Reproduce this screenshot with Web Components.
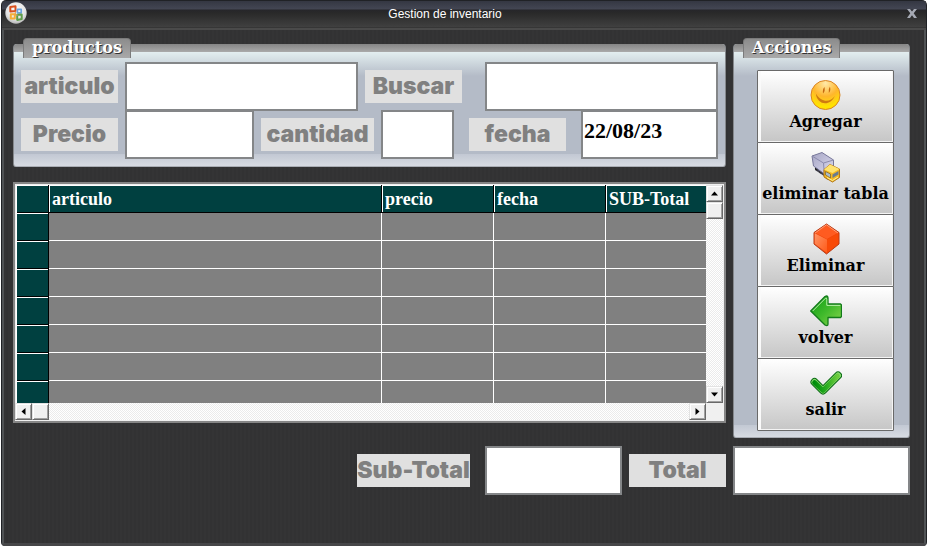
<!DOCTYPE html>
<html lang="es">
<head>
<meta charset="utf-8">
<title>Gestion de inventario</title>
<style>
  html, body { margin: 0; background: #fff; }
  body { font-family: "Liberation Sans", Arial, sans-serif; }
</style>
</head>
<body>
<inv-window heading="Gestion de inventario">
  <inv-group heading="productos" slot="form">
    <inv-row>
      <inv-field label="articulo" style="--w:337px"></inv-field>
      <inv-field label="Buscar" style="--w:353px;--gap:23px"></inv-field>
    </inv-row>
    <inv-row>
      <inv-field label="Precio" style="--w:233px"></inv-field>
      <inv-field label="cantidad" style="--w:193px;--label:113px"></inv-field>
      <inv-field label="fecha" value="22/08/23" style="--w:257px;--gap:15px;--lead:8px"></inv-field>
    </inv-row>
  </inv-group>
  <inv-table slot="table"></inv-table>
  <inv-group heading="Acciones" slot="actions" style="--pad:12px 15px 8px 23px">
    <inv-action icon="smile">Agregar</inv-action>
    <inv-action icon="truck">eliminar tabla</inv-action>
    <inv-action icon="cube">Eliminar</inv-action>
    <inv-action icon="arrow">volver</inv-action>
    <inv-action icon="check">salir</inv-action>
  </inv-group>
  <inv-field label="Sub-Total" slot="totals" style="--w:265px;--grow:0;--label:113px;--gap:15px"></inv-field>
  <inv-field label="Total" slot="totals" style="--w:281px;--grow:0"></inv-field>
</inv-window>

<script>
const define = (name, html, setup) => {
  const template = document.createElement('template');
  template.innerHTML = html;
  customElements.define(name, class extends HTMLElement {
    constructor() {
      super();
      this.attachShadow({ mode: 'open' }).append(template.content.cloneNode(true));
    }
    connectedCallback() { if (setup) setup(this, this.shadowRoot); }
  });
};

/* Window frame: title bar, two-column work area, totals line */
define('inv-window', `
<style>
  :host { display: flex; flex-direction: column; box-sizing: border-box; min-height: 100vh;
    margin: 0 1px; border: 1px solid #202226; border-bottom: 0; border-radius: 5px 5px 4px 4px; overflow: hidden;
    background: repeating-linear-gradient(90deg, #323233 0 2px, #343435 2px 4px); }
  header { display: flex; align-items: center; height: 29px; box-sizing: border-box; padding: 0 7px 3px 3px;
    border-bottom: 2px solid #4a4a4a;
    background: linear-gradient(#343742 0, #434653 8px, #26262a 9px, #292929 12px, #404040 26px, #2c2c2c 27px); }
  h1 { flex: 1; margin: 0; padding: 2px 42px 0 0; text-align: center; font-size: 12px; line-height: 16px; font-weight: 400; color: #fff; }
  header > svg { width: 22px; height: 22px; display: block; }
  button { width: 14px; height: 14px; padding: 0; border: 0; background: none; }
  button svg { display: block; margin: auto; }
  main { flex: 1; padding: 8px 14px 0 9px; border: 2px solid #505355; border-top: 0; border-bottom: 3px solid #464648; }
  .cols { display: grid; grid-template-columns: minmax(0, 1fr) 177px; gap: 7px; align-items: start; }
  .left { display: grid; gap: 15px; min-width: 0; }
  .totals { display: flex; justify-content: flex-end; gap: 7px; padding-top: 8px; }
</style>
<header>
  <svg viewBox="0 0 22 22" aria-hidden="true">
    <defs><radialGradient id="o" cx=".5" cy=".35" r=".7"><stop offset="0" stop-color="#fff"/><stop offset=".65" stop-color="#e2e2e2"/><stop offset="1" stop-color="#aaa"/></radialGradient></defs>
    <circle cx="11" cy="11" r="10.7" fill="url(#o)"/>
    <g fill="none" stroke-width="2" stroke-linejoin="round">
      <path d="M5.300 9.500V5L10.500 4.300v4.800z" stroke="#d8501f"/>
      <path d="M12.400 7.300h3.800v3.500h-3.800z" stroke="#6ba3dc" stroke-width="1.700"/>
      <path d="M5.800 12.300h4v4.200h-4z" stroke="#f5ae35"/>
      <path d="M12.200 12.800l4.500-.3v4.500l-4.500.9z" stroke="#5f9d4a"/>
      <path d="M10.300 9.500v3.500h2.500" stroke="#e6a04a" stroke-width="1.200"/>
    </g>
  </svg>
  <h1></h1>
  <button aria-label="Cerrar"><svg width="10" height="9" viewBox="0 0 10 9"><path d="M0 0h3l2 2.500L7 0h3L6.700 4.300 10 9H7L5 6.200 3 9H0l3.300-4.700z" fill="#a5a9b3"/></svg></button>
</header>
<main>
  <div class="cols">
    <div class="left"><slot name="form"></slot><slot name="table"></slot></div>
    <slot name="actions"></slot>
  </div>
  <div class="totals"><slot name="totals"></slot></div>
</main>`, (el, root) => { root.querySelector('h1').textContent = el.getAttribute('heading'); });

/* Titled panel with a raised tab */
define('inv-group', `
<style>
  :host { display: grid; }
  h2 { grid-area: 1 / 1; z-index: 1; justify-self: start; align-self: start; box-sizing: border-box; height: 20px; margin: 0 0 0 10px; padding: 0 8px;
    border: 1px solid #7b7b7b; border-bottom: 0; border-radius: 4px 4px 0 0; background: linear-gradient(#8c8c8c, #a9a9a9);
    font: bold 16px/18px "DejaVu Serif", serif; color: #fff; text-shadow: 1px 1px 0 #333; }
  section { grid-area: 1 / 1; min-width: 0; margin-top: 6px; padding-top: 14px; border-radius: 4px 4px 3px 3px; box-sizing: border-box;
    border: 1px solid #85888c; border-top: 0; border-bottom-color: #a9adb4;
    background:
      linear-gradient(#858585, #aaa 8px, transparent 8px),
      linear-gradient(to top, #d7dbe2, #c2c8d3 12px, transparent 12px),
      linear-gradient(#e3eef0 8px, #dbe6e9 12px, #b4bbc7 32px); }
  .body { padding: var(--pad, 4px 7px 8px 7px); margin-bottom: -1px; }
</style>
<h2></h2><section><div class="body"><slot></slot></div></section>`,
(el, root) => { root.querySelector('h2').textContent = el.getAttribute('heading'); });

define('inv-row', `
<style>:host { display: flex; gap: 7px; height: 48px; } :host(:last-child) { height: 49px; }</style><slot></slot>`);

/* Label plate and text box */
define('inv-field', `
<style>
  :host { display: flex; align-items: center; gap: var(--gap, 7px); box-sizing: border-box; height: 49px; min-width: 0;
    padding-left: var(--lead, 0); flex: var(--grow, 1) 1 var(--w); }
  label { flex: none; width: var(--label, 97px); text-align: center; background: #e0e0e0; color: #808080;
    font: 900 23px/33px Inter, sans-serif; font-variant-ligatures: none; white-space: nowrap; }
  input { flex: 1; min-width: 0; width: 0; height: 49px; box-sizing: border-box; border: 2px solid #848688; border-radius: 0;
    background: #fff; padding: 0 1px 8px; margin: 0; outline: 0; color: #000; font: bold 22px/32px "Liberation Serif", serif; }
</style>
<label for="f"></label><input id="f" type="text">`,
(el, root) => {
  root.querySelector('label').textContent = el.getAttribute('label');
  root.querySelector('input').value = el.getAttribute('value') || '';
});

const icons = {
  smile: `<defs><radialGradient id="g" cx=".5" cy=".1" r="1"><stop offset="0" stop-color="#ffe9a8"/><stop offset=".45" stop-color="#ffb62c"/><stop offset=".8" stop-color="#ffe400"/><stop offset="1" stop-color="#ffd800"/></radialGradient></defs>
    <circle cx="15.500" cy="16" r="14.500" fill="url(#g)" stroke="#d98324"/>
    <path d="M14.500 8q-2.200 2-1.500 6.500q2.400-2 1.500-6.500zM20 7.500q-2 2.500-1.200 6.500q2.200-2 1.200-6.500z" fill="#c66a10"/>
    <path d="M5.800 14.500C7 26 20 28 24.800 17C20.500 23.500 11.500 24 5.800 14.500z" fill="#cf7b10"/>`,
  truck: `<defs><linearGradient id="g" x2="1" y2="1"><stop offset="0" stop-color="#a6a5c4"/><stop offset="1" stop-color="#dddcf0"/></linearGradient></defs>
    <path d="M5 15l15 10v4L5 19z" fill="#444452"/><circle cx="7" cy="17.500" r="2" fill="#222"/><circle cx="11" cy="20.500" r="2" fill="#333"/><circle cx="18" cy="26" r="2.500" fill="#333"/>
    <path d="M2 5L12 1.500l11.500 7.500v6l-9 8L3.500 15z" fill="url(#g)" stroke="#77779a"/><path d="M2 5L13.500 12 23.500 9M13.500 12l.8 11" fill="none" stroke="#8b8bad"/>
    <path d="M14 18.500l6-5 9.500 4.500v8.500L22.500 31 14 26z" fill="#f5b920" stroke="#b37716"/><path d="M14 18.500l6-5 9.500 4.500-7 4z" fill="#ffe36e"/>
    <path d="M15.500 20.500l5 2.500v4l-5-3z" fill="#a8bacb" stroke="#806020" stroke-width=".7"/><path d="M22.500 23.500l6-3.500v3.500l-6 3.500z" fill="#677b93"/><path d="M17 26.500l5.500 3 5.500-3.500" fill="none" stroke="#fff3a0"/>`,
  cube: `<defs><linearGradient id="g" x2="1" y2="1"><stop offset="0" stop-color="#ff9465"/><stop offset="1" stop-color="#ff5a18"/></linearGradient></defs>
    <path d="M16.500 1l12.500 8.500V21L16.500 31 4 21V9.500z" fill="#f04308" stroke="#b63b17"/><path d="M16.500 1.800L28 9.700 17 16 5 9.700z" fill="#ff5b20"/>
    <path d="M4.700 10.300L17 16.500V30L4.700 20.800z" fill="url(#g)"/><path d="M17 16.500L28.300 10v10.800L17 30z" fill="#f84a08"/>
    <path d="M5 10L16.500 1.800 28 10" fill="none" stroke="#ff9c74"/>`,
  arrow: `<defs><linearGradient id="g" x2="1" y2="1"><stop offset="0" stop-color="#0c9e12"/><stop offset=".5" stop-color="#3fb92b"/><stop offset="1" stop-color="#8ad64e"/></linearGradient></defs>
    <path d="M.7 16L15 1.500q3-1.500 3 1.500v6h12.500l1 1v11.500l-1 1H18V29q0 2.500-3 1z" fill="url(#g)" stroke="#137a1b" stroke-width="1.300" stroke-linejoin="round"/>
    <path d="M2.700 16L15.500 3.200q1.300-.8 1.300 1V10.400h13.500" fill="none" stroke="#b8efa8"/>`,
  check: `<defs><linearGradient id="g" x2="1"><stop offset="0" stop-color="#008d0c"/><stop offset=".5" stop-color="#25ab1e"/><stop offset="1" stop-color="#6dcc3d"/></linearGradient></defs>
    <path d="M4.500 15L13 23.500 28 8.500" fill="none" stroke="#0c6d16" stroke-width="8" stroke-linejoin="round" stroke-linecap="round"/>
    <path d="M4.500 15L13 23.500 28 8.500" fill="none" stroke="#86d86d" stroke-width="6" stroke-linejoin="round" stroke-linecap="round"/>
    <path d="M4.500 15.500L13 23.500 27.500 9" fill="none" stroke="url(#g)" stroke-width="4.600" stroke-linejoin="round" stroke-linecap="round"/>`
};

define('inv-action', `
<style>
  :host { display: block; height: 72px; }
  button { display: flex; flex-direction: column; align-items: center; gap: 2px; box-sizing: border-box; width: 100%; height: 73px;
    margin: 0; padding: 8px 0 0; border: 1px solid #696969; border-radius: 1px; color: #000;
    background: linear-gradient(#fff, #c6c6c6); box-shadow: inset 3px 0 #fafafa, inset -1px -1px #f4f4f4, inset 0 1px #fff; }
  svg { width: 32px; height: 32px; flex: none; }
  span { font: bold 16px/18px "DejaVu Serif", serif; white-space: nowrap; }
</style>
<button><svg viewBox="0 0 32 32" aria-hidden="true"></svg><span><slot></slot></span></button>`,
(el, root) => { root.querySelector('svg').innerHTML = icons[el.getAttribute('icon')]; });

/* Scroll bar with an arrow at each end */
define('inv-scroll', `
<style>
  :host { display: flex; background: repeating-conic-gradient(#fff 0 25%, #ebebeb 0 50%) 0 0 / 2px 2px; }
  :host([vertical]) { flex-direction: column; }
  button, i { display: grid; place-items: center; box-sizing: border-box; width: 17px; height: 17px; padding: 0; margin: 0; border-radius: 0; flex: none;
    background: #f0f0f0; border: 1px solid #e3e3e3; border-right-color: #696969; border-bottom-color: #696969;
    box-shadow: inset 1px 1px #fff, inset -1px -1px #a0a0a0; }
  .end { margin-left: auto; }
  :host([vertical]) .end { margin: auto 0 0; }
  svg { transform: rotate(-90deg); }
  .end svg { transform: rotate(90deg); }
  :host([vertical]) svg { transform: none; }
  :host([vertical]) .end svg { transform: rotate(180deg); }
</style>
<button aria-label="Retroceder"><svg width="7" height="7"><path d="M0 5.500L3.500 1.500 7 5.500z"/></svg></button><i></i>
<button class="end" aria-label="Avanzar"><svg width="7" height="7"><path d="M0 5.500L3.500 1.500 7 5.500z"/></svg></button>`);

define('inv-table', `
<style>
  :host { display: grid; grid-template-columns: minmax(0, 1fr) 17px; padding: 1px 1px 1px 0; border: 2px solid #868686; background: #f0f0f0; }
  .view { height: 218px; overflow: hidden; border-left: 1px solid #fff; margin-left: 1px; }
  table { width: 100%; table-layout: fixed; border-collapse: separate; border-spacing: 0; }
  th, td { box-sizing: border-box; height: 28px; padding: 0; }
  th { background: #004040; border: 0 solid #000; border-width: 0 1px 1px 0; box-shadow: inset 0 1px #fff;
    color: #fff; text-align: left; font: bold 18px/26px "Liberation Serif", serif; }
  thead th + th { box-shadow: inset 1px 1px #fff; padding-left: 3px; }
  th:last-child { border-right: 0; }
  td { background: #808080; border: 0 solid #fff; border-width: 0 1px 1px 0; }
  td:last-child { border-right: 0; }
  .h { width: 32px; } .n { width: 112px; } .l { width: 100px; }
</style>
<div class="view"><table>
  <colgroup><col class="h"><col><col class="n"><col class="n"><col class="l"></colgroup>
  <thead><tr><th></th><th scope="col">articulo</th><th scope="col">precio</th><th scope="col">fecha</th><th scope="col">SUB-Total</th></tr></thead>
  <tbody></tbody>
</table></div>
<inv-scroll vertical></inv-scroll>
<inv-scroll></inv-scroll>`,
(el, root) => {
  root.querySelector('tbody').innerHTML = '<tr><th scope="row"></th><td></td><td></td><td></td><td></td></tr>'.repeat(7);
});
</script>
</body>
</html>
